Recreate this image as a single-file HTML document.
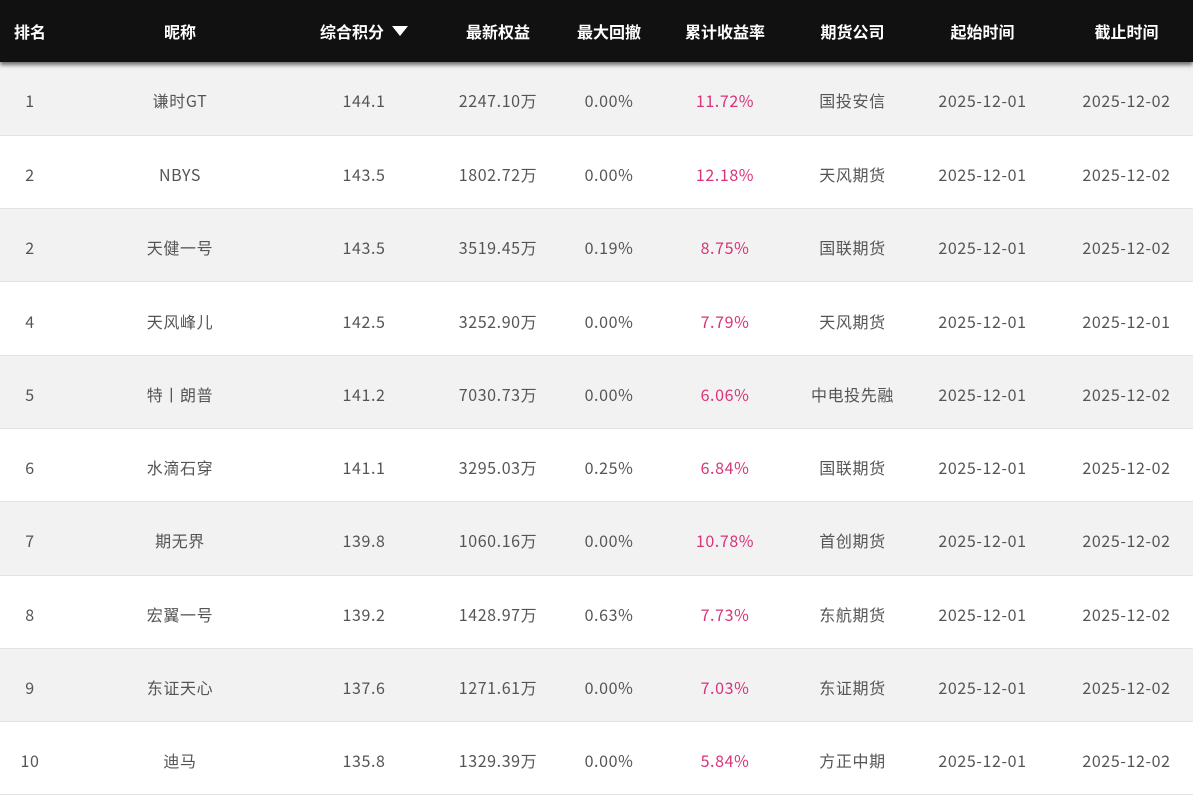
<!DOCTYPE html>
<html><head><meta charset="utf-8"><style>
body{margin:0;width:1193px;height:795px;overflow:hidden;background:#fff;font-family:"Noto Sans CJK SC","Liberation Sans",sans-serif;}
.hd{position:relative;z-index:2;box-shadow:0 3px 4px rgba(0,0,0,.55);}
table{border-collapse:collapse;width:1193px;table-layout:fixed;}
th{background:#111;color:#fff;font-weight:bold;font-size:16px;height:62px;padding:0;line-height:20px;}
td{height:73.3px;padding:4px 0 0 0;box-sizing:border-box;text-align:center;font-size:16px;color:#555;border-bottom:1px solid #e3e3e3;line-height:20px;vertical-align:middle;letter-spacing:0.6px;}
tr:nth-child(odd) td{background:#f2f2f2;}
.p{color:#d9337a;}
.tri{display:inline-block;width:0;height:0;border-left:8px solid transparent;border-right:8px solid transparent;border-top:10px solid #fff;margin-left:8px;vertical-align:2px;}
</style></head><body>
<div class="hd"><table>
<colgroup><col style="width:60px"><col style="width:240px"><col style="width:128px"><col style="width:140px"><col style="width:82px"><col style="width:150px"><col style="width:105px"><col style="width:155px"><col style="width:133px"></colgroup>
<tr><th>排名</th><th>昵称</th><th>综合积分<span class="tri"></span></th><th>最新权益</th><th>最大回撤</th><th>累计收益率</th><th>期货公司</th><th>起始时间</th><th>截止时间</th></tr></table></div>
<table>
<colgroup><col style="width:60px"><col style="width:240px"><col style="width:128px"><col style="width:140px"><col style="width:82px"><col style="width:150px"><col style="width:105px"><col style="width:155px"><col style="width:133px"></colgroup>
<tbody>
<tr><td>1</td><td>谦时GT</td><td>144.1</td><td>2247.10万</td><td>0.00%</td><td class="p">11.72%</td><td>国投安信</td><td>2025-12-01</td><td>2025-12-02</td></tr>
<tr><td>2</td><td>NBYS</td><td>143.5</td><td>1802.72万</td><td>0.00%</td><td class="p">12.18%</td><td>天风期货</td><td>2025-12-01</td><td>2025-12-02</td></tr>
<tr><td>2</td><td>天健一号</td><td>143.5</td><td>3519.45万</td><td>0.19%</td><td class="p">8.75%</td><td>国联期货</td><td>2025-12-01</td><td>2025-12-02</td></tr>
<tr><td>4</td><td>天风峰儿</td><td>142.5</td><td>3252.90万</td><td>0.00%</td><td class="p">7.79%</td><td>天风期货</td><td>2025-12-01</td><td>2025-12-01</td></tr>
<tr><td>5</td><td>特丨朗普</td><td>141.2</td><td>7030.73万</td><td>0.00%</td><td class="p">6.06%</td><td>中电投先融</td><td>2025-12-01</td><td>2025-12-02</td></tr>
<tr><td>6</td><td>水滴石穿</td><td>141.1</td><td>3295.03万</td><td>0.25%</td><td class="p">6.84%</td><td>国联期货</td><td>2025-12-01</td><td>2025-12-02</td></tr>
<tr><td>7</td><td>期无界</td><td>139.8</td><td>1060.16万</td><td>0.00%</td><td class="p">10.78%</td><td>首创期货</td><td>2025-12-01</td><td>2025-12-02</td></tr>
<tr><td>8</td><td>宏翼一号</td><td>139.2</td><td>1428.97万</td><td>0.63%</td><td class="p">7.73%</td><td>东航期货</td><td>2025-12-01</td><td>2025-12-02</td></tr>
<tr><td>9</td><td>东证天心</td><td>137.6</td><td>1271.61万</td><td>0.00%</td><td class="p">7.03%</td><td>东证期货</td><td>2025-12-01</td><td>2025-12-02</td></tr>
<tr><td>10</td><td>迪马</td><td>135.8</td><td>1329.39万</td><td>0.00%</td><td class="p">5.84%</td><td>方正中期</td><td>2025-12-01</td><td>2025-12-02</td></tr>
</tbody></table>
</body></html>
